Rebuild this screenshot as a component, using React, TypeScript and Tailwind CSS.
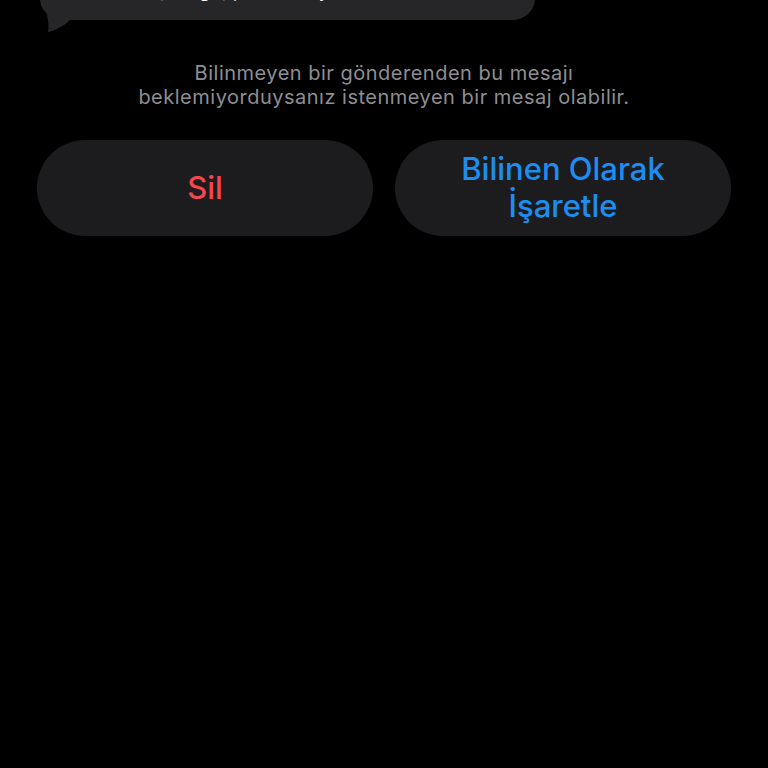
export default function App() {
  return (
    <div className="w-[768px] h-[768px] bg-black overflow-hidden" style={{ fontFamily: 'Inter, "Noto Sans", sans-serif' }}>
      {/* Incoming bubble, mostly scrolled off the top */}
      <div className="relative ml-[40px] w-[495px] -mt-[60px] h-[80px] rounded-[22px] bg-[#262628]">
        <p className="absolute left-[40px] bottom-[20px] text-[19px] leading-none text-white whitespace-nowrap">
          Merhaba, kargo, paketiniz yolda
        </p>
        <svg className="absolute -left-[2px] bottom-[-12px]" width="34" height="28" viewBox="0 0 34 28">
          <path d="M8 0 C8 10 12 20 10 28 C18 26 26 22 32 16 L20 0 Z" fill="#262628" />
        </svg>
      </div>

      <p className="mt-[41px] text-center text-[20px] leading-[24px] tracking-[0.5px] text-[#8e8e93]">
        Bilinmeyen bir gönderenden bu mesajı
        <br />
        beklemiyorduysanız istenmeyen bir mesaj olabilir.
      </p>

      <div className="mt-[31px] px-[37px] grid grid-cols-2 gap-[22px]">
        <button className="h-[96px] rounded-full bg-[#1c1c1e] flex items-center justify-center text-[31px] leading-[36px] font-medium text-[#f5454f]">
          Sil
        </button>
        <button className="h-[96px] rounded-full bg-[#1c1c1e] flex items-center justify-center text-center text-[31px] leading-[37px] font-medium text-[#1c8ef2] pb-[2px]">
          Bilinen Olarak
          <br />
          İşaretle
        </button>
      </div>
    </div>
  );
}
